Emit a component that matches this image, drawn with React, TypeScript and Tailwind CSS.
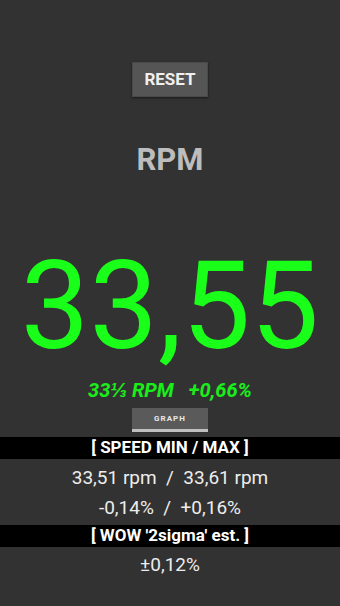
import React from "react";

export default function App() {
  return (
    <div className="w-[340px] h-[606px] bg-[#323232] flex flex-col items-center overflow-hidden" style={{ fontFamily: "Roboto, 'Liberation Sans', sans-serif" }}>
      <div className="mt-[62px] w-[76px] h-[35px] bg-[#555555] border border-[#4a4a4a] flex items-center justify-center text-[#f0f0f0] text-[17px] font-bold shadow-[0_1px_2px_rgba(0,0,0,0.5)]">
        RESET
      </div>
      <div className="mt-[43px] text-[31px] leading-[40px] font-bold text-[#bdbdbd]">RPM</div>
      <div className="mt-[66px] text-[122px] leading-[122px] text-[#1aff1a]">33,55</div>
      <div className="mt-[10px] flex gap-[15px] text-[20px] leading-[24px] font-bold italic text-[#1aee1a]">
        <span>33⅓ RPM</span>
        <span>+0,66%</span>
      </div>
      <div className="mt-[6px] w-[76px] h-[24px] bg-[#5a5a5a] border-b-[3px] border-[#bfbfbf] flex items-center justify-center text-[#e8e8e8] text-[8px] tracking-[1px] font-bold">
        GRAPH
      </div>
      <div className="mt-[5px] w-full h-[22px] bg-black flex items-center justify-center text-white text-[17px] font-bold">
        [ SPEED MIN / MAX ]
      </div>
      <div className="mt-[8px] text-[19px] leading-[22px] text-[#ededed]">33,51 rpm&nbsp;&nbsp;/&nbsp;&nbsp;33,61 rpm</div>
      <div className="mt-[8px] text-[19px] leading-[22px] text-[#ededed]">-0,14%&nbsp;&nbsp;/&nbsp;&nbsp;+0,16%</div>
      <div className="mt-[6px] w-full h-[22px] bg-black flex items-center justify-center text-white text-[17px] font-bold">
        [ WOW '2sigma' est. ]
      </div>
      <div className="mt-[7px] text-[19px] leading-[22px] text-[#ededed]">±0,12%</div>
    </div>
  );
}
